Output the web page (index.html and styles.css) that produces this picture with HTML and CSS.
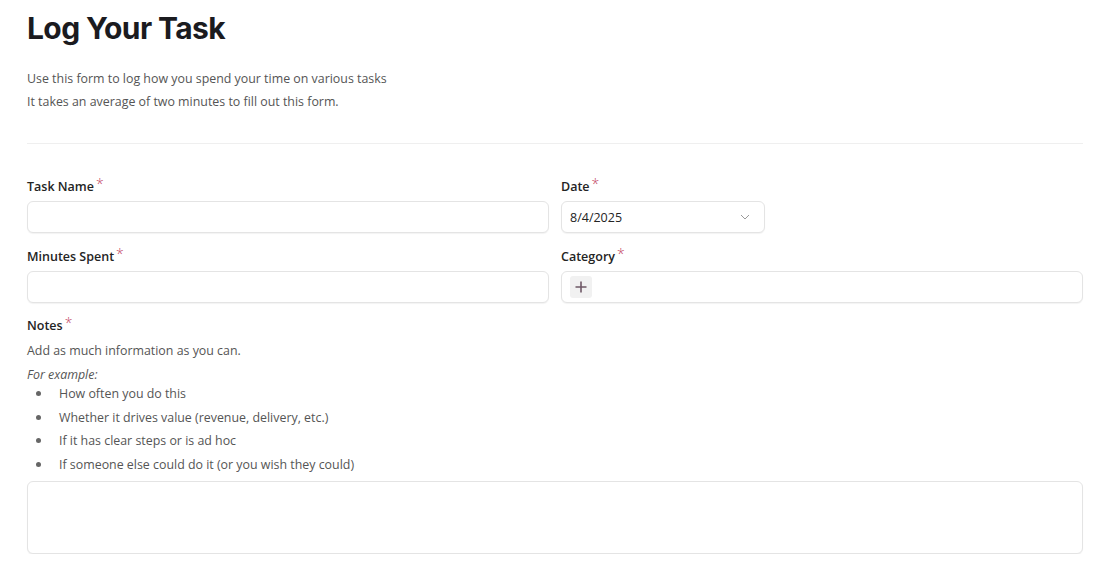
FILE: index.html
```html
<!DOCTYPE html>
<html lang="en">
<head>
<meta charset="utf-8">
<title>Log Your Task</title>
<link rel="stylesheet" href="styles.css">
</head>
<body>
<main class="page">
  <header class="intro">
    <h1 class="title">Log Your Task</h1>
    <p class="desc">Use this form to log how you spend your time on various tasks</p>
    <p class="desc">It takes an average of two minutes to fill out this form.</p>
  </header>
  <hr class="divider">
  <form class="form">
    <div class="grid">
      <div class="field">
        <label class="label">Task Name<span class="req">*</span></label>
        <div class="input"></div>
      </div>
      <div class="field">
        <label class="label">Date<span class="req">*</span></label>
        <div class="input date">
          <span class="value">8/4/2025</span>
          <svg class="chev" width="10" height="6" viewBox="0 0 10 6"><path d="M1 1 L5 5 L9 1" fill="none" stroke="#9a9a9a" stroke-width="1"/></svg>
        </div>
      </div>
      <div class="field">
        <label class="label">Minutes Spent<span class="req">*</span></label>
        <div class="input"></div>
      </div>
      <div class="field">
        <label class="label">Category<span class="req">*</span></label>
        <div class="input cat">
          <span class="add">
            <svg width="12" height="12" viewBox="0 0 12 12"><path d="M6 0.5 V11.5 M0.5 6 H11.5" stroke="#6e5866" stroke-width="1.6"/></svg>
          </span>
        </div>
      </div>
    </div>
    <div class="field notes">
      <label class="label">Notes<span class="req">*</span></label>
      <p class="help">Add as much information as you can.</p>
      <p class="example">For example:</p>
      <ul class="list">
        <li>How often you do this</li>
        <li>Whether it drives value (revenue, delivery, etc.)</li>
        <li>If it has clear steps or is ad hoc</li>
        <li>If someone else could do it (or you wish they could)</li>
      </ul>
      <div class="input textarea"></div>
    </div>
  </form>
</main>
</body>
</html>
```
FILE: styles.css
```css
html, body {
  margin: 0;
  padding: 0;
  background: #ffffff;
}
body {
  font-family: "Open Sans", "Noto Sans", sans-serif;
  color: #242424;
}
.page {
  width: 1056px;
  margin-left: 27px;
}
.intro {
  padding-top: 8px;
}
.title {
  margin: 0 0 19px 0;
  font-family: Inter, "Open Sans", sans-serif;
  font-weight: 700;
  font-size: 30px;
  line-height: 40px;
  letter-spacing: -0.02em;
  color: #1b1b1f;
}
.desc {
  margin: 0;
  font-size: 12.4px;
  line-height: 23px;
  color: #555555;
}
.divider {
  border: 0;
  border-top: 1px solid #efefef;
  margin: 30px 0 0 0;
}
.form {
  padding-top: 33px;
}
.grid {
  display: grid;
  grid-template-columns: 522px 522px;
  column-gap: 12px;
  row-gap: 14px;
  align-items: start;
}
.field {
  display: flex;
  flex-direction: column;
}
.label {
  font-size: 12.5px;
  font-weight: 600;
  line-height: 18px;
  margin-bottom: 5px;
  color: #242424;
}
.req {
  color: #c2455f;
  font-weight: 300;
  font-size: 14px;
  margin-left: 2px;
  position: relative;
  top: -2px;
}
.input {
  box-sizing: border-box;
  height: 32px;
  border: 1px solid #e4e4e4;
  border-radius: 6px;
  background: #fff;
  box-shadow: 0 1px 1px rgba(0,0,0,0.05);
}
.date {
  width: 204px;
  display: flex;
  align-items: center;
  justify-content: space-between;
  padding: 0 14px 0 8px;
}
.value {
  font-size: 12.5px;
  color: #242424;
}
.cat {
  display: flex;
  align-items: center;
  padding-left: 8px;
}
.add {
  width: 22px;
  height: 22px;
  border-radius: 3px;
  background: #f1f1f1;
  display: flex;
  align-items: center;
  justify-content: center;
}
.notes {
  margin-top: 13px;
}
.notes .label {
  margin-bottom: 4px;
}
.help {
  margin: 0;
  font-size: 12.4px;
  line-height: 23px;
  color: #555555;
}
.example {
  margin: 5px 0 0 0;
  font-size: 12.4px;
  line-height: 16px;
  font-style: italic;
  color: #555555;
}
.list {
  margin: -1px 0 0 0;
  padding-left: 32px;
  list-style: none;
}
.list li {
  position: relative;
  font-size: 12.4px;
  line-height: 23.5px;
  color: #555555;
}
.list li::before {
  content: "";
  position: absolute;
  left: -23px;
  top: 9px;
  width: 5px;
  height: 5px;
  border-radius: 50%;
  background: #666666;
}
.textarea {
  margin-top: 5px;
  height: 73px;
}
```
